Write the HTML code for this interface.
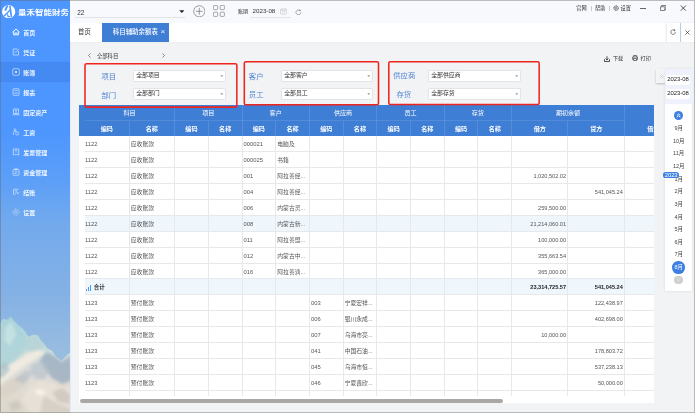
<!DOCTYPE html>
<html lang="zh-CN">
<head>
<meta charset="utf-8">
<title>量禾智能财务</title>
<style>
*{box-sizing:border-box;margin:0;padding:0}
html,body{width:695px;height:413px;overflow:hidden}
body{position:relative;background:#f2f3f5;font-family:"Liberation Sans","Noto Sans CJK SC",sans-serif;color:#333;font-size:6px;line-height:1}
#app{position:absolute;left:0;top:0;width:695px;height:413px;overflow:hidden;will-change:transform;filter:blur(0.3px)}
.abs,.side *,.top *,.tabs *,.main *{position:absolute}
/* sidebar */
.side{position:absolute;left:0;top:0;width:70px;height:413px;overflow:hidden;
 background:linear-gradient(180deg,#4d96ff 0px,#4d96ff 130px,#5c9ff8 180px,#73aaec 225px,#86b2e4 300px,#98bce0 350px,#a5c4e0 413px)}
.side .mnt{left:0;top:300px;width:70px;height:113px}
.side .logo{left:2.4px;top:4.9px;width:13.3px;height:13.3px}
.side .ttl{left:18px;top:8.7px;font-size:7.3px;font-weight:bold;color:#fff;white-space:nowrap;transform:scaleX(1.165);transform-origin:0 0}
.side .act{left:0;top:62.2px;width:70px;height:19.7px;background:#458af3}
.side .mi{left:0;width:70px;height:20px}
.side .mi svg{left:11.7px;top:5.2px;width:8px;height:8px;opacity:.72}
.side .mi span{left:23.2px;top:6.6px;font-size:6px;font-weight:bold;color:rgba(255,255,255,.9);white-space:nowrap}
/* top */
.top{position:absolute;left:70px;top:0;width:625px;height:22.8px;background:#f7f9fc}
.tabs{position:absolute;left:70px;top:22.8px;width:625px;height:19.3px;background:#fff}
.main{position:absolute;left:70px;top:42px;width:625px;height:371px;background:linear-gradient(180deg,#eceded 0,#f2f3f5 1.6px)}
.sel{background:#fff;border:1px solid #e2e4e8;border-radius:1.2px;height:12px;width:92px}
.sel span{left:2.2px;top:2.3px;font-size:5.9px;color:#333;white-space:nowrap}
.sel i{right:1.6px;top:4.2px;width:3.2px;height:1.9px;background:#9a9a9a;clip-path:polygon(0 0,100% 0,50% 100%)}
.lab{font-size:7.35px;color:#4f83d3;white-space:nowrap}
.red{border:1.5px solid #ee1c25;border-radius:1.8px}
/* table */
.tbl{position:absolute;left:79px;top:105px;width:575.4px;height:298.4px;background:#fff;overflow:hidden}
.tbl *{position:absolute}
.th{background:#3f7ed5}
.hg{top:0;height:15.6px;line-height:15.4px;text-align:center;color:#fff;font-size:6.1px;white-space:nowrap}
.hs{top:15.6px;height:15.6px;line-height:16.4px;text-align:center;color:#fff;font-size:6.1px;white-space:nowrap;font-weight:bold}
.hv{width:0.8px;background:rgba(255,255,255,.12)}
.hh{height:0.7px;background:rgba(255,255,255,.10)}
.row{left:5.5px;width:580px;height:15.92px;border-bottom:0.9px solid #e6e8eb}
.row.hl{background:#eff7fd}
.row .c{top:0;height:15.9px;line-height:17px;font-size:5.8px;color:#555;white-space:nowrap;margin-left:-5.5px}
.row .c.num{text-align:right;font-size:5.6px}
.row .c.bold{font-weight:bold;color:#222}
.row .c.sum{font-size:5.5px;font-weight:bold;color:#333;padding-left:8.2px}
.bars{left:0;top:5.6px;width:6px;height:5.6px}
.bars b{bottom:0;width:1.3px;background:#4a9af5}
.bars b:nth-child(1){left:0;height:2px}
.bars b:nth-child(2){left:2.3px;height:3.6px}
.bars b:nth-child(3){left:4.6px;height:5.6px}
.vl{top:31.2px;width:0.9px;height:260.3px;background:#e6e8eb}
.cover{left:0;top:291.6px;width:580px;height:10px;background:#fff}
.sb{left:0.6px;top:294px;width:423.4px;height:4px;border-radius:2px;background:#aaa8a7}
/* right panel */
.rp{position:absolute;left:665.2px;top:69.4px;width:27.2px;height:221.2px;background:#fff;box-shadow:0 0 3px rgba(0,0,0,.10)}
.rp *{position:absolute}
.rp .hd{left:0;top:0;width:28.2px;height:34.8px;background:#eff2fc}
.rp .df{left:1.1px;width:23.6px;height:9.8px;background:#fff;border-radius:2px;font-size:5.9px;line-height:9.8px;text-align:center;color:#222}
.rp .m{left:0;width:27px;text-align:center;font-size:5.5px;color:#444;height:8px;line-height:8px}
.frame{position:absolute;left:0;top:0;width:695px;height:413px;border:1px solid rgba(100,100,100,.4);pointer-events:none}
</style>
</head>
<body>
<div id="app">
<div class="side">
 <svg class="mnt" viewBox="0 300 70 113" preserveAspectRatio="none">
  <defs>
   <filter id="bl" x="-10%" y="-10%" width="120%" height="120%"><feGaussianBlur stdDeviation="0.7"/></filter>
   <filter id="bl2" x="-20%" y="-20%" width="140%" height="140%"><feGaussianBlur stdDeviation="1.6"/></filter>
   <linearGradient id="mg" x1="0" y1="0" x2="0" y2="1"><stop offset="0" stop-color="#aad3db"/><stop offset=".3" stop-color="#c2dbdc"/><stop offset=".55" stop-color="#dcdcd8"/><stop offset="1" stop-color="#e2dacd"/></linearGradient>
  </defs>
  <g filter="url(#bl)">
   <path d="M-2 327 L2 320 L4 318.4 L6 320 L8 319.6 L11 316.8 L13 320 L15 322 L19 326 L22 328 L25 331.5 L27 335 L29 337 L31 335.4 L33 334.8 L36 335 L38 335.6 L41 341 L44 344 L47 348 L50 349.4 L52 350.7 L55 355 L57 357.5 L60 359.6 L62 360.8 L64 358 L66 356 L68 354 L72 352 L72 415 L-2 415Z" fill="url(#mg)"/>
  </g>
  <g filter="url(#bl2)">
   <path d="M2 322 L11 318 L19 327 L27 336 L26 348 L16 360 L4 368 L-2 364Z" fill="#a9d3da" opacity=".75"/>
   <path d="M6 326 L12 322 L16 334 L10 346 L4 340Z" fill="#c9e4e4" opacity=".8"/>
   <path d="M27 338 L38 337 L44 346 L40 352 L30 352 L24 348Z" fill="#b6d3d6" opacity=".8"/>
   <path d="M-2 372 L8 366 L18 360 L28 353 L38 350 L46 352 L38 358 L28 364 L16 372 L6 380 L-2 386Z" fill="#f1ebe0" opacity=".95"/>
   <path d="M46 352 L54 356 L62 362 L70 356 L72 380 L62 384 L52 378 L44 368 L40 360Z" fill="#93a6bc" opacity=".7"/>
   <path d="M30 366 L42 360 L50 370 L44 380 L34 378Z" fill="#b4c0cc" opacity=".6"/>
   <path d="M-2 388 L10 380 L22 374 L30 378 L22 388 L10 396 L-2 400Z" fill="#d8d0c4" opacity=".7"/>
   <path d="M-2 366 L6 362 L10 370 L2 378 L-2 378Z" fill="#a8c0c8" opacity=".7"/>
   <path d="M30 386 L42 380 L54 384 L64 388 L72 386 L72 415 L20 415 L22 398Z" fill="#e8e1d6" opacity=".9"/>
   <path d="M34 392 Q40 386 46 392 Q42 399 34 392Z" fill="#f8f1e6"/>
   <path d="M52 392 L62 388 L70 394 L70 404 L58 402Z" fill="#c4beb6" opacity=".6"/>
   <path d="M-2 400 L12 396 L24 402 L30 415 L-2 415Z" fill="#dfd8cc" opacity=".9"/>
   <path d="M8 404 L18 400 L22 408 L12 412Z" fill="#b4b4b2" opacity=".4"/>
   <path d="M14 380 L26 370 L34 372 L24 384Z" fill="#aebccb" opacity=".55"/>
   <path d="M44 396 L58 404 L70 408 L70 413 L40 413Z" fill="#c9c4bc" opacity=".6"/>
  </g>
 </svg>
 <svg class="logo" viewBox="0 0 26 26"><defs><clipPath id="lc"><circle cx="13" cy="13" r="13"/></clipPath></defs><circle cx="13" cy="13" r="13" fill="#fff"/><g clip-path="url(#lc)" stroke="#4d96ff" fill="none"><path d="M10.8 0.5 L6.2 11" stroke-width="3.8"/><path d="M15.4 1 L18.6 24" stroke-width="3.2"/><path d="M16 9.6 L3.6 21.8" stroke-width="2.8"/><path d="M10.8 18 L11.8 22.6 L15.8 22.6" stroke-width="2.4"/></g></svg>
 <div class="ttl">量禾智能财务</div>
 <div class="act"></div>
 <div class="mi" style="top:23px"><svg viewBox="0 0 16 16" style="opacity:1"><path d="M1.5 8 L8 2 L14.5 8 M3.5 7.5 V14 H6.5 V10 H9.5 V14 H12.5 V7.5" fill="none" stroke="#fff" stroke-width="1.9" stroke-linejoin="round" stroke-linecap="round"/></svg><span>首页</span></div>
 <div class="mi" style="top:43px"><svg viewBox="0 0 16 16"><path d="M11 2 H2.5 V14 H13 V6 M5 6.5 L7.5 9 L13.5 2.5" fill="none" stroke="#fff" stroke-width="1.5"/></svg><span>凭证</span></div>
 <div class="mi" style="top:63px"><svg viewBox="0 0 16 16"><rect x="1.5" y="1.5" width="13" height="13" rx="1.5" fill="none" stroke="#fff" stroke-width="1.5"/><rect x="6" y="6" width="4" height="4" fill="#fff"/></svg><span>账簿</span></div>
 <div class="mi" style="top:83px"><svg viewBox="0 0 16 16"><rect x="2" y="1.5" width="12" height="13" rx="1" fill="none" stroke="#fff" stroke-width="1.5"/><path d="M5 5 H11 M6 8 V12 M10 8 V12" stroke="#fff" stroke-width="1.5" fill="none"/></svg><span>报表</span></div>
 <div class="mi" style="top:103px"><svg viewBox="0 0 16 16"><path d="M3 2 H13 V11 H3Z M1 13.5 H15 M6 5 H10 M6 8 H10" fill="none" stroke="#fff" stroke-width="1.6"/></svg><span>固定资产</span></div>
 <div class="mi" style="top:123px"><svg viewBox="0 0 16 16"><circle cx="6" cy="3.5" r="2" fill="none" stroke="#fff" stroke-width="1.4"/><path d="M3 14 V8.5 Q3 6.5 6 6.5 Q9 6.5 9.5 8" fill="none" stroke="#fff" stroke-width="1.4"/><circle cx="10.5" cy="11" r="3.2" fill="none" stroke="#fff" stroke-width="1.4"/></svg><span>工资</span></div>
 <div class="mi" style="top:143px"><svg viewBox="0 0 16 16"><path d="M2.5 14 V2 H13.5 V14 L11 12.5 L8 14 L5 12.5Z M5.5 5.5 H10.5 M6 8.5 H7 M9 8.5 H10" fill="none" stroke="#fff" stroke-width="1.5"/></svg><span>发票管理</span></div>
 <div class="mi" style="top:163px"><svg viewBox="0 0 16 16"><rect x="2" y="3" width="12" height="11.5" rx="1.5" fill="none" stroke="#fff" stroke-width="1.5"/><path d="M5.5 1.5 H10.5 V4 H5.5Z M5 8 H11 M5 11 H9" fill="none" stroke="#fff" stroke-width="1.4"/></svg><span>资金管理</span></div>
 <div class="mi" style="top:183px"><svg viewBox="0 0 16 16"><path d="M13 2.5 H3 V12.5 H7 M6 5.5 H10 M6 8.5 L9 8.5 M9 7 L12 12 L13.5 9" fill="none" stroke="#fff" stroke-width="1.4"/></svg><span>结账</span></div>
 <div class="mi" style="top:203px"><svg viewBox="0 0 16 16"><circle cx="8" cy="8" r="6" fill="none" stroke="#fff" stroke-width="1.4" stroke-dasharray="2.4 1.2"/><circle cx="8" cy="8" r="2.2" fill="none" stroke="#fff" stroke-width="1.2"/></svg><span>设置</span></div>
</div>

<div class="top">
 <span style="left:7.2px;top:10.2px;font-size:6.4px;color:#333">22</span>
 <div style="left:5px;top:17px;width:110px;height:1px;background:#e2e4e9"></div>
 <i style="left:109.2px;top:10.2px;width:5.3px;height:2.8px;background:#222;clip-path:polygon(0 0,100% 0,50% 100%)"></i>
 <svg style="left:122.8px;top:4.8px;width:12.6px;height:12.6px" viewBox="0 0 26 26"><circle cx="13" cy="13" r="11.6" fill="none" stroke="#606060" stroke-width="1.25"/><path d="M13 6 V20 M6 13 H20" stroke="#606060" stroke-width="1.25"/></svg>
 <svg style="left:143px;top:5.3px;width:11.8px;height:11.8px" viewBox="0 0 24 24"><g fill="none" stroke="#727272" stroke-width="1.25"><rect x=".8" y=".8" width="8.6" height="8.6" rx="1.6"/><rect x="14.6" y=".8" width="8.6" height="8.6" rx="1.6"/><rect x=".8" y="14.6" width="8.6" height="8.6" rx="1.6"/><rect x="14.6" y="14.6" width="8.6" height="8.6" rx="1.6"/></g></svg>
 <span style="left:168px;top:8.8px;font-size:5.1px;color:#333;white-space:nowrap">账期</span>
 <span style="left:182.6px;top:8.1px;font-size:6.2px;color:#333;white-space:nowrap">2023-08</span>
 <div style="left:180px;top:17.3px;width:41px;height:0.6px;background:#e3e5e9"></div>
 <svg style="left:210px;top:8.4px;width:7.2px;height:6.6px" viewBox="0 0 14 13"><rect x="1" y="2" width="12" height="10" rx="1" fill="none" stroke="#c9c7ca" stroke-width="1.3"/><path d="M1 5 H13 M4 0.5 V3 M10 0.5 V3 M4 8 H10" stroke="#c9c7ca" stroke-width="1.3"/></svg>
 <svg style="left:225px;top:8.7px;width:6.8px;height:6.8px" viewBox="0 0 12 12"><path d="M10.2 6 A4.2 4.2 0 1 1 8.6 2.7" fill="none" stroke="#777" stroke-width="1.1"/><path d="M7.4 1 L10.6 2.2 L8.8 4.6Z" fill="#777"/></svg>
 <span style="left:506.2px;top:5.6px;font-size:5.2px;color:#333;white-space:nowrap">官网</span>
 <div style="left:520.6px;top:5.6px;width:0.6px;height:5.4px;background:#c9ccd2"></div>
 <span style="left:525px;top:5.6px;font-size:5.2px;color:#333;white-space:nowrap">帮助</span>
 <div style="left:539.2px;top:5.6px;width:0.6px;height:5.4px;background:#c9ccd2"></div>
 <svg style="left:542.5px;top:5.1px;width:6.2px;height:6.2px" viewBox="0 0 12 12"><circle cx="6" cy="6" r="4.3" fill="none" stroke="#3a3a3a" stroke-width="1.9" stroke-dasharray="2.2 0.8"/><circle cx="6" cy="6" r="1.7" fill="none" stroke="#3a3a3a" stroke-width="1.1"/></svg>
 <span style="left:550.6px;top:5.6px;font-size:5.2px;color:#333;white-space:nowrap">设置</span>
 <div style="left:570px;top:7.5px;width:5.9px;height:1px;background:#666"></div>
 <svg style="left:589.6px;top:5.2px;width:6.6px;height:6px" viewBox="0 0 13 12"><path d="M1 3.5 H9.5 V11 H1Z M3 3.5 V1 H12 V9 H9.5" fill="none" stroke="#333" stroke-width="1.2"/></svg>
 <svg style="left:610.4px;top:5px;width:6.6px;height:6.2px" viewBox="0 0 12 12"><path d="M1 1 L11 11 M11 1 L1 11" stroke="#222" stroke-width="1.5"/></svg>
</div>

<div class="tabs">
 <span style="left:8.1px;top:6.2px;font-size:6.3px;color:#333;white-space:nowrap">首页</span>
 <div style="left:32px;top:0;width:66.8px;height:19.3px;background:#3f7ed5"></div>
 <span style="left:42.8px;top:6px;font-size:6.45px;color:#fff;white-space:nowrap;font-weight:500">科目辅助余额表</span>
 <span style="left:90.6px;top:5.4px;font-size:8px;color:#f0f5fc">×</span>
 <div style="left:596.5px;top:0;width:28.5px;height:19.3px;background:#fff;box-shadow:-1.5px 0 2px rgba(0,0,0,.10)"></div>
 <svg style="left:600.4px;top:6.4px;width:6.2px;height:6.2px" viewBox="0 0 12 12"><path d="M10.4 6 A4.4 4.4 0 1 1 8.6 2.5" fill="none" stroke="#444" stroke-width="1.3"/><path d="M7 0.6 L10.6 2 L8.4 4.8Z" fill="#444"/></svg>
 <div style="left:610px;top:0;width:1px;height:19.3px;background:#b4cdf3"></div>
 <svg style="left:615px;top:7.4px;width:5px;height:5px" viewBox="0 0 10 10"><path d="M1 1 L9 9 M9 1 L1 9" stroke="#333" stroke-width="1.4"/></svg>
</div>

<div class="main">
 <div style="left:0;top:0;width:1.4px;height:371px;background:#e3e9fa"></div>
 <svg style="left:17.6px;top:10.6px;width:3px;height:5px" viewBox="0 0 6 10"><path d="M5 1 L1 5 L5 9" fill="none" stroke="#444" stroke-width="1.2"/></svg>
 <span style="left:27px;top:12px;font-size:5.3px;color:#333;white-space:nowrap">全部科目</span>
 <svg style="left:92px;top:10.6px;width:3px;height:5px" viewBox="0 0 6 10"><path d="M1 1 L5 5 L1 9" fill="none" stroke="#444" stroke-width="1.2"/></svg>

 <span class="lab" style="left:31.5px;top:30.9px">项目</span>
 <div class="sel" style="left:63px;top:28px;width:93px"><span>全部项目</span><i></i></div>
 <span class="lab" style="left:31.5px;top:49.8px">部门</span>
 <div class="sel" style="left:63px;top:46px;width:93px"><span>全部部门</span><i></i></div>

 <span class="lab" style="left:178.8px;top:31px">客户</span>
 <div class="sel" style="left:211px;top:28px;width:92px"><span>全部客户</span><i></i></div>
 <span class="lab" style="left:178.8px;top:49.1px">员工</span>
 <div class="sel" style="left:211px;top:46px;width:92px"><span>全部员工</span><i></i></div>

 <span class="lab" style="left:323.2px;top:29.7px">供应商</span>
 <div class="sel" style="left:358px;top:28px;width:93px"><span>全部供应商</span><i></i></div>
 <span class="lab" style="left:326.5px;top:48.6px">存货</span>
 <div class="sel" style="left:358px;top:46px;width:93px"><span>全部存货</span><i></i></div>

 <svg style="left:534px;top:13.6px;width:6px;height:6px" viewBox="0 0 12 12"><path d="M1 6.5 V11 H11 V6.5 M6 0.5 V8 M3.2 5.2 L6 8 L8.8 5.2" fill="none" stroke="#333" stroke-width="1.7"/></svg>
 <span style="left:543px;top:14px;font-size:5.1px;color:#333;white-space:nowrap">下载</span>
 <svg style="left:561.8px;top:13.4px;width:6.2px;height:6px" viewBox="0 0 12 12"><path d="M3 4 V1 H9 V4 M3 9 H1 V4 H11 V9 H9 M3 7 H9 V11 H3Z" fill="none" stroke="#333" stroke-width="1.3"/></svg>
 <span style="left:570.6px;top:14px;font-size:5.1px;color:#333;white-space:nowrap">打印</span>
</div>

<div class="tbl">
<div class="th" style="left:0;top:0;width:575.4px;height:31.2px"></div>
<div class="hg" style="left:5.5px;width:90.1px">科目</div>
<div class="hg" style="left:95.6px;width:67.4px">项目</div>
<div class="hg" style="left:163.0px;width:67.4px">客户</div>
<div class="hg" style="left:230.4px;width:67.4px">供应商</div>
<div class="hg" style="left:297.8px;width:67.4px">员工</div>
<div class="hg" style="left:365.2px;width:67.4px">存货</div>
<div class="hg" style="left:432.6px;width:113.0px">期初余额</div>
<div class="hs" style="left:5.5px;width:44.7px">编码</div>
<div class="hs" style="left:50.2px;width:45.4px">名称</div>
<div class="hs" style="left:95.6px;width:33.7px">编码</div>
<div class="hs" style="left:129.3px;width:33.7px">名称</div>
<div class="hs" style="left:163.0px;width:33.7px">编码</div>
<div class="hs" style="left:196.7px;width:33.7px">名称</div>
<div class="hs" style="left:230.4px;width:33.7px">编码</div>
<div class="hs" style="left:264.1px;width:33.7px">名称</div>
<div class="hs" style="left:297.8px;width:33.7px">编码</div>
<div class="hs" style="left:331.5px;width:33.7px">名称</div>
<div class="hs" style="left:365.2px;width:33.7px">编码</div>
<div class="hs" style="left:398.9px;width:33.7px">名称</div>
<div class="hs" style="left:432.6px;width:56.3px">借方</div>
<div class="hs" style="left:488.9px;width:56.7px">贷方</div>
<div class="hs" style="left:545.6px;width:57.4px">借方</div>
<div class="hv" style="left:49.7px;top:15.6px;height:15.6px"></div>
<div class="hv" style="left:95.1px;top:0.0px;height:31.2px"></div>
<div class="hv" style="left:128.8px;top:15.6px;height:15.6px"></div>
<div class="hv" style="left:162.5px;top:0.0px;height:31.2px"></div>
<div class="hv" style="left:196.2px;top:15.6px;height:15.6px"></div>
<div class="hv" style="left:229.9px;top:0.0px;height:31.2px"></div>
<div class="hv" style="left:263.6px;top:15.6px;height:15.6px"></div>
<div class="hv" style="left:297.3px;top:0.0px;height:31.2px"></div>
<div class="hv" style="left:331.0px;top:15.6px;height:15.6px"></div>
<div class="hv" style="left:364.7px;top:0.0px;height:31.2px"></div>
<div class="hv" style="left:398.4px;top:15.6px;height:15.6px"></div>
<div class="hv" style="left:432.1px;top:0.0px;height:31.2px"></div>
<div class="hv" style="left:488.4px;top:15.6px;height:15.6px"></div>
<div class="hv" style="left:545.1px;top:0.0px;height:31.2px"></div>
<div class="hh" style="left:5.5px;top:15.3px;width:540.1px"></div>
<div class="row" style="top:31.20px">
<span class="c" style="left:5.9px">1122</span>
<span class="c" style="left:51.8px">应收账款</span>
<span class="c" style="left:164.6px">000021</span>
<span class="c" style="left:198.3px">电脑及</span>
</div>
<div class="row" style="top:47.12px">
<span class="c" style="left:5.9px">1122</span>
<span class="c" style="left:51.8px">应收账款</span>
<span class="c" style="left:164.6px">000025</span>
<span class="c" style="left:198.3px">书籍</span>
</div>
<div class="row" style="top:63.04px">
<span class="c" style="left:5.9px">1122</span>
<span class="c" style="left:51.8px">应收账款</span>
<span class="c" style="left:164.6px">001</span>
<span class="c" style="left:198.3px">阿拉善经...</span>
<span class="c num" style="left:432.6px;width:54.5px">1,020,502.02</span>
</div>
<div class="row" style="top:78.96px">
<span class="c" style="left:5.9px">1122</span>
<span class="c" style="left:51.8px">应收账款</span>
<span class="c" style="left:164.6px">004</span>
<span class="c" style="left:198.3px">阿拉善经...</span>
<span class="c num" style="left:488.9px;width:54.9px">541,045.24</span>
</div>
<div class="row" style="top:94.88px">
<span class="c" style="left:5.9px">1122</span>
<span class="c" style="left:51.8px">应收账款</span>
<span class="c" style="left:164.6px">006</span>
<span class="c" style="left:198.3px">内蒙古灵...</span>
<span class="c num" style="left:432.6px;width:54.5px">259,500.00</span>
</div>
<div class="row hl" style="top:110.80px">
<span class="c" style="left:5.9px">1122</span>
<span class="c" style="left:51.8px">应收账款</span>
<span class="c" style="left:164.6px">008</span>
<span class="c" style="left:198.3px">内蒙古新...</span>
<span class="c num" style="left:432.6px;width:54.5px">21,214,060.01</span>
</div>
<div class="row" style="top:126.72px">
<span class="c" style="left:5.9px">1122</span>
<span class="c" style="left:51.8px">应收账款</span>
<span class="c" style="left:164.6px">011</span>
<span class="c" style="left:198.3px">阿拉善盟...</span>
<span class="c num" style="left:432.6px;width:54.5px">100,000.00</span>
</div>
<div class="row" style="top:142.64px">
<span class="c" style="left:5.9px">1122</span>
<span class="c" style="left:51.8px">应收账款</span>
<span class="c" style="left:164.6px">012</span>
<span class="c" style="left:198.3px">内蒙古中...</span>
<span class="c num" style="left:432.6px;width:54.5px">355,663.54</span>
</div>
<div class="row" style="top:158.56px">
<span class="c" style="left:5.9px">1122</span>
<span class="c" style="left:51.8px">应收账款</span>
<span class="c" style="left:164.6px">016</span>
<span class="c" style="left:198.3px">阿拉善滴...</span>
<span class="c num" style="left:432.6px;width:54.5px">365,000.00</span>
</div>
<div class="row hl" style="top:174.48px">
<span class="c sum" style="left:6.6px"><i class="bars"><b></b><b></b><b></b></i>合计</span>
<span class="c num bold" style="left:432.6px;width:54.5px">23,314,725.57</span>
<span class="c num bold" style="left:488.9px;width:54.9px">541,045.24</span>
</div>
<div class="row" style="top:190.40px">
<span class="c" style="left:5.9px">1123</span>
<span class="c" style="left:51.8px">预付账款</span>
<span class="c" style="left:232.0px">003</span>
<span class="c" style="left:265.7px">宁夏宏祥...</span>
<span class="c num" style="left:488.9px;width:54.9px">122,438.97</span>
</div>
<div class="row" style="top:206.32px">
<span class="c" style="left:5.9px">1123</span>
<span class="c" style="left:51.8px">预付账款</span>
<span class="c" style="left:232.0px">006</span>
<span class="c" style="left:265.7px">银川永成...</span>
<span class="c num" style="left:488.9px;width:54.9px">402,698.00</span>
</div>
<div class="row" style="top:222.24px">
<span class="c" style="left:5.9px">1123</span>
<span class="c" style="left:51.8px">预付账款</span>
<span class="c" style="left:232.0px">007</span>
<span class="c" style="left:265.7px">乌海市亮...</span>
<span class="c num" style="left:432.6px;width:54.5px">10,000.00</span>
</div>
<div class="row" style="top:238.16px">
<span class="c" style="left:5.9px">1123</span>
<span class="c" style="left:51.8px">预付账款</span>
<span class="c" style="left:232.0px">041</span>
<span class="c" style="left:265.7px">中国石油...</span>
<span class="c num" style="left:488.9px;width:54.9px">178,803.72</span>
</div>
<div class="row" style="top:254.08px">
<span class="c" style="left:5.9px">1123</span>
<span class="c" style="left:51.8px">预付账款</span>
<span class="c" style="left:232.0px">045</span>
<span class="c" style="left:265.7px">乌海市恒...</span>
<span class="c num" style="left:488.9px;width:54.9px">537,238.13</span>
</div>
<div class="row" style="top:270.00px">
<span class="c" style="left:5.9px">1123</span>
<span class="c" style="left:51.8px">预付账款</span>
<span class="c" style="left:232.0px">046</span>
<span class="c" style="left:265.7px">宁夏鑫欣...</span>
<span class="c num" style="left:488.9px;width:54.9px">50,000.00</span>
</div>
<div class="row" style="top:285.92px">
</div>
<div class="vl" style="left:49.7px"></div>
<div class="vl" style="left:95.1px"></div>
<div class="vl" style="left:128.8px"></div>
<div class="vl" style="left:162.5px"></div>
<div class="vl" style="left:196.2px"></div>
<div class="vl" style="left:229.9px"></div>
<div class="vl" style="left:263.6px"></div>
<div class="vl" style="left:297.3px"></div>
<div class="vl" style="left:331.0px"></div>
<div class="vl" style="left:364.7px"></div>
<div class="vl" style="left:398.4px"></div>
<div class="vl" style="left:432.1px"></div>
<div class="vl" style="left:488.4px"></div>
<div class="vl" style="left:545.1px"></div>
<div class="cover"></div>
</div>
<div class="abs sbwrap" style="left:79px;top:105px;width:575.4px;height:298.4px;pointer-events:none"><div class="abs sb" style="position:absolute"></div></div>

<svg class="abs" style="left:0;top:0;width:695px;height:413px" viewBox="0 0 695 413"><g fill="none" stroke="#f0241f" stroke-width="1.55">
<rect x="85" y="63.7" width="151.85" height="43.4" rx="1.6"/>
<rect x="244.3" y="61.7" width="134.2" height="43.1" rx="1.6"/>
<rect x="388.8" y="61.7" width="150.35" height="42.8" rx="1.6"/>
</g></svg>

<div class="abs" style="left:656.4px;top:69.4px;width:9.2px;height:13.8px;background:#f3f4f6;box-shadow:0 0.5px 2px rgba(0,0,0,.22)">
 <svg class="abs" style="left:2.2px;top:4.4px;width:5px;height:5px" viewBox="0 0 10 10"><path d="M1 1 L5 5 L1 9 M5 1 L9 5 L5 9" fill="none" stroke="#c4c6ca" stroke-width="1.2"/></svg>
</div>
<div class="rp">
 <div class="hd"></div>
 <div class="df" style="top:5.4px">2023-08</div>
 <div class="df" style="top:19.6px">2023-08</div>
 <div style="left:8.9px;top:41.3px;width:9.2px;height:9.2px;border-radius:50%;background:#3c7fe0"></div>
 <svg style="left:10.9px;top:43.5px;width:5.2px;height:5px" viewBox="0 0 10 10"><path d="M1.5 5 L5 1.8 L8.5 5 M1.5 8.6 L5 5.4 L8.5 8.6" fill="none" stroke="#fff" stroke-width="1.8"/></svg>
 <div class="m" style="top:54.9px">9月</div>
 <div class="m" style="top:67.5px">10月</div>
 <div class="m" style="top:80.1px">11月</div>
 <div class="m" style="top:92.7px">12月</div>
 <div class="m" style="top:105.4px">1月</div>
 <div class="m" style="top:118px">2月</div>
 <div class="m" style="top:130.6px">3月</div>
 <div class="m" style="top:143.2px">4月</div>
 <div class="m" style="top:155.8px">5月</div>
 <div class="m" style="top:168.4px">6月</div>
 <div class="m" style="top:181px">7月</div>
 <div style="left:7.3px;top:191.8px;width:12.6px;height:12.6px;border-radius:50%;background:#3c7fe0"></div>
 <div class="m" style="top:194.1px;color:#fff">8月</div>
 <div style="left:9.3px;top:206.4px;width:8.6px;height:8.6px;border-radius:50%;background:#cfcfcf"></div>
 <svg style="left:11.2px;top:208.6px;width:4.8px;height:4.6px" viewBox="0 0 10 10"><path d="M1.5 1.4 L5 4.6 L8.5 1.4 M1.5 5 L5 8.2 L8.5 5" fill="none" stroke="#e9e9e9" stroke-width="1.3"/></svg>
</div>
<div class="abs" style="left:663.3px;top:172.2px;width:15.7px;height:5.7px;border-radius:2.85px;background:#3c7fe0;color:#fff;font-size:5.9px;line-height:6px;text-align:center;letter-spacing:-0.1px">2023</div>

<div class="frame"></div>
</div>
</body>
</html>
